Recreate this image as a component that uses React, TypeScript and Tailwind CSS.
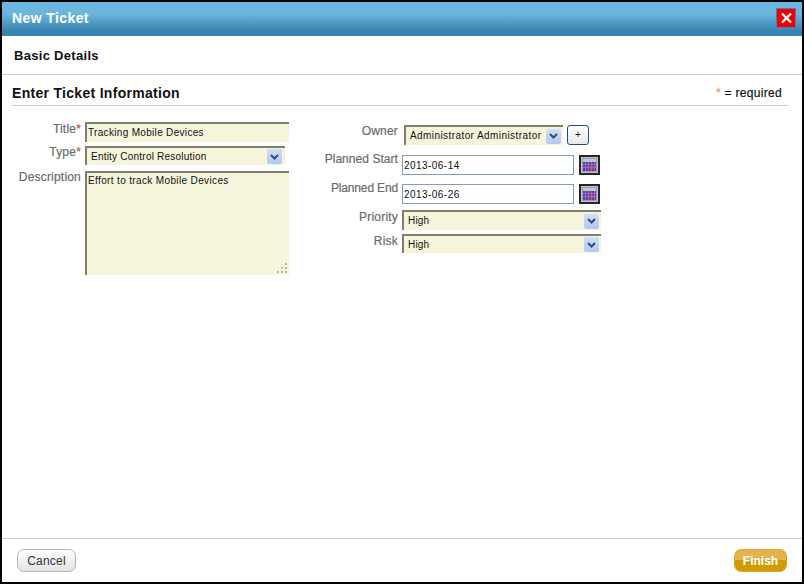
import React from "react";

const Req = () => <span className="text-[#e8552d]">*</span>;

const Arrow = () => (
  <span className="flex h-[15px] w-[15px] items-center justify-center rounded-[2px] bg-gradient-to-b from-[#d3def8] to-[#b4c7f0]">
    <svg width="9" height="6" viewBox="0 0 9 6">
      <path d="M1 1l3.5 3.5L8 1" fill="none" stroke="#2f4d7e" strokeWidth="2" />
    </svg>
  </span>
);

const Select = ({ value, className }: { value: string; className: string }) => (
  <div
    className={`flex items-center justify-between border-t-2 border-l-2 border-[#7d7d70] bg-[#f5f5dc] text-[10px] text-[#111] ${className}`}
  >
    <span className="-mt-[1px]">{value}</span>
    <Arrow />
  </div>
);

const CalendarIcon = () => (
  <button className="ml-[5px] h-[20px] w-[21px] border-2 border-[#262626] bg-[#c4c4c4] p-[1px]">
    <svg width="15" height="14" viewBox="0 0 15 14" className="block">
      <rect width="15" height="14" fill="#9a9ab0" />
      <rect x="1" y="1" width="13" height="3" fill="#b7cccc" />
      <rect x="1" y="4" width="13" height="9" fill="#5f3aa8" />
      <path d="M3.5 4v9M6.5 4v9M9.5 4v9M12.5 4v9M1 6.5h13M1 9.5h13" stroke="#8d72c4" strokeWidth="1" />
      <rect x="8" y="8" width="3" height="3" fill="#e8503a" />
    </svg>
  </button>
);

const DateField = ({ value }: { value: string }) => (
  <input
    readOnly
    value={value}
    className="h-[20px] w-[172px] border border-[#7f9db9] bg-white px-[1px] text-[10px] tracking-[0.45px] text-[#111] outline-none"
  />
);

const labelClass =
  "shrink-0 whitespace-nowrap text-right text-[12px] leading-[13px] text-[#6a6a6a] [-webkit-text-stroke:0.2px_#6a6a6a]";

export default function App() {
  return (
    <div className="flex h-[584px] w-[804px] flex-col border-2 border-black bg-white font-['Liberation_Sans',Arial,sans-serif]">
      <header className="flex h-[34px] shrink-0 items-center justify-between bg-gradient-to-b from-[#6ab6de] from-35% to-[#3784b1] to-85% pb-[2px] pl-[10px] pr-[6px]">
        <h1 className="text-[14px] font-bold tracking-[0.4px] text-white">New Ticket</h1>
        <button className="flex h-[20px] w-[20px] items-center justify-center border border-[#4a7fb5] bg-[#f00000]">
          <svg width="11" height="10" viewBox="0 0 11 10">
            <path d="M1 0.5l9 9M10 0.5l-9 9" stroke="#fff" strokeWidth="2.2" />
          </svg>
        </button>
      </header>

      <div className="flex h-[39px] shrink-0 items-center border-b border-[#cccccc] pl-[12px] pt-[2px]">
        <h2 className="text-[13px] font-bold tracking-[0.3px] text-[#111]">Basic Details</h2>
      </div>

      <div className="mx-[10px] mr-[14px] flex h-[31px] shrink-0 items-center justify-between border-b border-[#cccccc] pt-[6px]">
        <h3 className="text-[14px] font-bold tracking-[0.3px] text-[#111]">Enter Ticket Information</h3>
        <span className="mr-[6px] -mt-[1px] text-[12px] tracking-[0.3px] text-[#111]">
          <span className="text-[#f0803c]">*</span>
          <span className="[-webkit-text-stroke:0.2px_#111]"> = required</span>
        </span>
      </div>

      <main className="flex flex-1 items-start">
        <section className="mt-[16px] flex w-[287px] shrink-0 flex-col">
          <div className="flex">
            <label className={`${labelClass} w-[79px] pt-[1px] tracking-[0.2px]`}>
              Title<Req />
            </label>
            <input
              readOnly
              value="Tracking Mobile Devices"
              className="ml-[4px] h-[20px] w-[204px] border-t-2 border-l-2 border-[#7d7d70] bg-[#f5f5dc] px-[1px] pb-[2px] text-[10px] tracking-[0.32px] text-[#111] outline-none"
            />
          </div>
          <div className="mt-[4px] flex">
            <label className={`${labelClass} w-[79px] tracking-[0.2px]`}>
              Type<Req />
            </label>
            <Select
              value="Entity Control Resolution"
              className="ml-[4px] h-[19px] w-[200px] pl-[4px] pr-[3px] tracking-[0.22px]"
            />
          </div>
          <div className="relative mt-[6px] flex">
            <label className={`${labelClass} w-[79px] tracking-[0.2px]`}>Description</label>
            <textarea
              readOnly
              value="Effort to track Mobile Devices"
              className="ml-[4px] h-[104px] w-[204px] resize-none border-t-2 border-l-2 border-[#7d7d70] bg-[#f5f5dc] px-[1px] pt-[1px] text-[10px] leading-[14px] tracking-[0.36px] text-[#111] outline-none"
            />
            <svg width="13" height="13" viewBox="0 0 13 13" className="absolute bottom-0 right-0">
              <path d="M9 1h2v2h-2zM5 5h2v2h-2zM9 5h2v2h-2zM1 9h2v2h-2zM5 9h2v2h-2zM9 9h2v2h-2z" fill="#b5b5a5" />
            </svg>
          </div>
        </section>

        <section className="mt-[19px] ml-[34px] flex flex-col">
          <div className="flex">
            <label className={`${labelClass} w-[75px] tracking-[0.2px]`}>Owner</label>
            <Select
              value="Administrator Administrator"
              className="ml-[6px] h-[20px] w-[159px] pl-[4px] pr-[2px] tracking-[0.42px]"
            />
            <button className="ml-[4px] h-[20px] w-[22px] rounded-[3px] border border-[#1f4f80] bg-gradient-to-b from-white to-[#e8e8e8] text-[10px] leading-none text-[#111]">
              +
            </button>
          </div>
          <div className="mt-[10px] flex">
            <label className={`${labelClass} w-[75px] -mt-[2px] tracking-[0.05px]`}>Planned Start</label>
            <div className="ml-[4px] flex">
              <DateField value="2013-06-14" />
              <CalendarIcon />
            </div>
          </div>
          <div className="mt-[9px] flex">
            <label className={`${labelClass} w-[75px] -mt-[2px] tracking-[-0.15px]`}>Planned End</label>
            <div className="ml-[4px] flex">
              <DateField value="2013-06-26" />
              <CalendarIcon />
            </div>
          </div>
          <div className="mt-[6px] flex">
            <label className={`${labelClass} w-[75px] pt-[1px] tracking-[0.2px]`}>Priority</label>
            <Select value="High" className="ml-[4px] h-[20px] w-[199px] pl-[4px] pr-[2px] tracking-[0.2px]" />
          </div>
          <div className="mt-[4px] flex">
            <label className={`${labelClass} w-[75px] pt-[1px] tracking-[0.2px]`}>Risk</label>
            <Select value="High" className="ml-[4px] h-[19px] w-[199px] pl-[4px] pr-[2px] tracking-[0.2px]" />
          </div>
        </section>
      </main>

      <footer className="flex h-[44px] shrink-0 items-start justify-between border-t border-[#cccccc] pt-[10px] pl-[15px] pr-[15px]">
        <button className="h-[23px] w-[59px] rounded-[7px] border border-[#b5b5b5] bg-gradient-to-b from-white to-[#e4e4e4] text-[12px] tracking-[0.2px] text-[#333]">
          Cancel
        </button>
        <button className="h-[23px] w-[53px] rounded-[7px] border border-[#d9a93a] bg-[linear-gradient(#e3b44c_0%,#e3b44c_50%,#d29a05_50%,#d29a05_100%)] text-[12px] font-bold text-white">
          Finish
        </button>
      </footer>
    </div>
  );
}
